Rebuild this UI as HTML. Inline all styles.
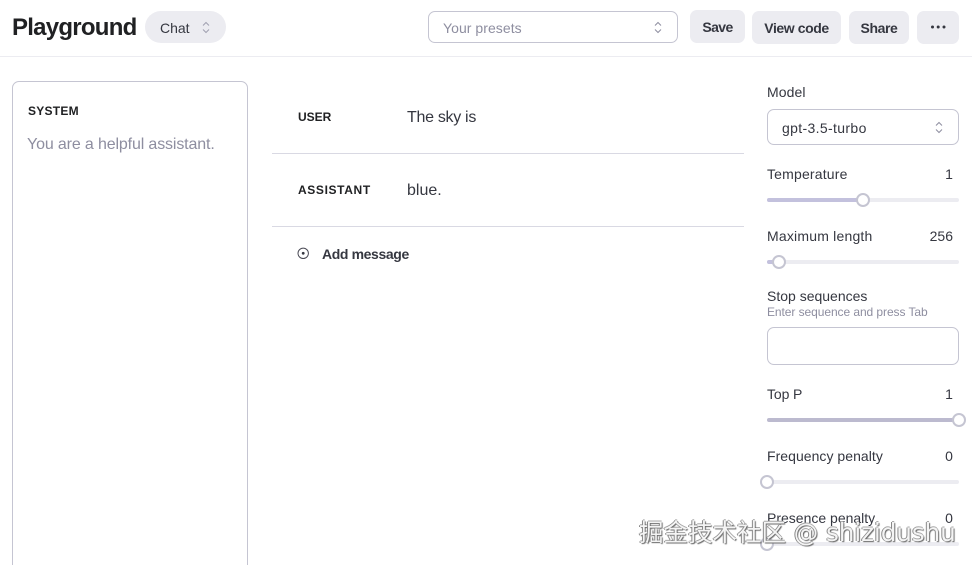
<!DOCTYPE html>
<html><head><meta charset="utf-8">
<style>
html,body{margin:0;padding:0;background:#fff}
#r{position:relative;width:972px;height:565px;overflow:hidden;background:#fff;font-family:"Liberation Sans",sans-serif;color:#353740}
.t{position:absolute;white-space:nowrap;line-height:20px;height:20px}
.b{position:absolute;box-sizing:border-box}
.btn{background:#ececf1;border-radius:7px;position:absolute;text-align:center;font-size:14px;font-weight:700;color:#353740;line-height:34px;height:33px;letter-spacing:-.4px}
.lab{font-size:14px;color:#353740;letter-spacing:.1px}
.cap{font-size:12px;font-weight:700;color:#202123}
.track{position:absolute;left:767px;width:192px;height:4px;background:#ececf1;border-radius:2px}
.fill{position:absolute;left:767px;height:4px;background:#c3c1dd;border-radius:2px}
.thumb{position:absolute;width:14px;height:14px;box-sizing:border-box;border:2px solid #c5c5d2;border-radius:50%;background:#fff}
svg{position:absolute;overflow:visible}
</style></head><body><div id="r">

<div class="t" style="left:12px;top:17px;font-size:24px;font-weight:700;color:#202123;line-height:22px;letter-spacing:-.75px">Playground</div>
<div class="b" style="left:145px;top:11px;width:81px;height:32px;border-radius:16px;background:#ececf1"></div>
<div class="t" style="left:160px;top:18px;font-size:14px;color:#353740">Chat</div>
<svg style="left:201px;top:21px" width="10" height="13" fill="none" stroke="#a0a0b0" stroke-width="1"><path d="M2 4.5L5 1.5L8 4.5M2 8.5L5 11.5L8 8.5"/></svg>

<div class="b" style="left:428px;top:11px;width:250px;height:32px;border:1px solid #c5c5d2;border-radius:7px"></div>
<div class="t" style="left:443px;top:18px;font-size:14px;color:#8e8ea0;letter-spacing:.05px">Your presets</div>
<svg style="left:653px;top:21px" width="10" height="13" fill="none" stroke="#8e8ea0" stroke-width="1"><path d="M2 4.5L5 1.5L8 4.5M2 8.5L5 11.5L8 8.5"/></svg>

<div class="btn" style="left:690px;top:10px;width:55px;line-height:34px;letter-spacing:-.6px">Save</div>
<div class="btn" style="left:752px;top:11px;width:89px;height:33px;letter-spacing:-.42px">View code</div>
<div class="btn" style="left:849px;top:11px;width:60px;height:33px;letter-spacing:-.4px">Share</div>
<div class="btn" style="left:917px;top:11px;width:42px;height:33px"></div>
<svg style="left:930px;top:25px" width="16" height="5" fill="#353740"><circle cx="2.5" cy="2" r="1.5"/><circle cx="8.2" cy="2" r="1.5"/><circle cx="14" cy="2" r="1.5"/></svg>

<div class="b" style="left:0;top:56px;width:972px;height:1px;background:#ececf1"></div>

<div class="b" style="left:12px;top:81px;width:236px;height:500px;border:1px solid #c5c5d2;border-radius:7px"></div>
<div class="t cap" style="left:28px;top:101px;letter-spacing:.25px">SYSTEM</div>
<div class="t" style="left:27px;top:135px;font-size:16px;color:#8e8ea0;letter-spacing:-.14px">You are a helpful assistant.</div>

<div class="t cap" style="left:298px;top:107px;letter-spacing:0">USER</div>
<div class="t" style="left:407px;top:108px;font-size:16px;color:#353740;letter-spacing:-.3px">The sky is</div>
<div class="b" style="left:272px;top:153px;width:472px;height:1px;background:#d9d9e3"></div>
<div class="t cap" style="left:298px;top:180px;letter-spacing:.63px">ASSISTANT</div>
<div class="t" style="left:407px;top:181px;font-size:16px;color:#353740">blue.</div>
<div class="b" style="left:272px;top:226px;width:472px;height:1px;background:#d9d9e3"></div>

<svg style="left:297px;top:247px" width="13" height="13" fill="none"><circle cx="6.2" cy="6.3" r="5.2" stroke="#4a4a55" stroke-width="1"/><circle cx="6.2" cy="6.3" r="1.4" fill="#353740"/></svg>
<div class="t" style="left:322px;top:244px;font-size:14px;font-weight:700;color:#353740;letter-spacing:-.38px">Add message</div>

<div class="t lab" style="left:767px;top:82px">Model</div>
<div class="b" style="left:767px;top:109px;width:192px;height:36px;border:1px solid #c5c5d2;border-radius:7px"></div>
<div class="t" style="left:782px;top:118px;font-size:14px;color:#353740;letter-spacing:.35px">gpt-3.5-turbo</div>
<svg style="left:934px;top:121px" width="10" height="13" fill="none" stroke="#8e8ea0" stroke-width="1"><path d="M2 4.5L5 1.5L8 4.5M2 8.5L5 11.5L8 8.5"/></svg>

<div class="t lab" style="left:767px;top:164px;letter-spacing:.18px">Temperature</div>
<div class="t lab" style="right:19px;top:164px">1</div>
<div class="track" style="top:198px"></div>
<div class="fill" style="top:198px;width:96px"></div>
<div class="thumb" style="left:856px;top:193px"></div>

<div class="t lab" style="left:767px;top:226px;letter-spacing:.2px">Maximum length</div>
<div class="t lab" style="right:19px;top:226px;letter-spacing:0">256</div>
<div class="track" style="top:260px"></div>
<div class="fill" style="top:260px;width:12px"></div>
<div class="thumb" style="left:772px;top:255px"></div>

<div class="t lab" style="left:767px;top:286px;letter-spacing:0">Stop sequences</div>
<div class="t" style="left:767px;top:303px;font-size:12px;color:#8e8ea0;line-height:18px;letter-spacing:-.07px">Enter sequence and press Tab</div>
<div class="b" style="left:767px;top:327px;width:192px;height:38px;border:1px solid #c5c5d2;border-radius:7px"></div>

<div class="t lab" style="left:767px;top:384px;letter-spacing:-.1px">Top P</div>
<div class="t lab" style="right:19px;top:384px">1</div>
<div class="fill" style="top:418px;width:192px;background:#bcbacf"></div>
<div class="thumb" style="left:952px;top:413px"></div>

<div class="t lab" style="left:767px;top:446px;letter-spacing:.04px">Frequency penalty</div>
<div class="t lab" style="right:19px;top:446px">0</div>
<div class="track" style="top:480px"></div>
<div class="thumb" style="left:760px;top:475px"></div>

<div class="t lab" style="left:767px;top:508px;letter-spacing:0">Presence penalty</div>
<div class="t lab" style="right:19px;top:508px">0</div>
<div class="track" style="top:542px"></div>
<div class="thumb" style="left:760px;top:537px"></div>

<div class="t" style="left:639px;top:518px;height:30px;line-height:30px;font-size:24.5px;color:#f4f4f4;font-family:'DejaVu Sans','Noto Sans CJK SC',sans-serif;text-shadow:-1px 0 0 #888,1px 1px 1px #666,0 -1px 0 #aaa">掘金技术社区 @ shizidushu</div>

</div></body></html>
